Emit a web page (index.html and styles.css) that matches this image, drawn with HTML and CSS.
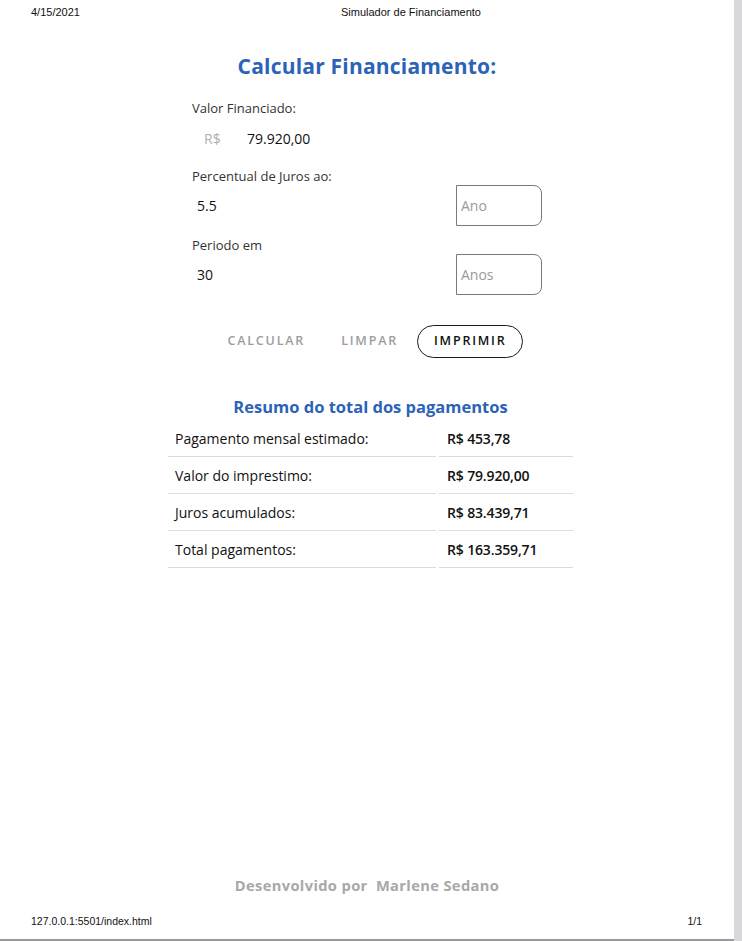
FILE: index.html
```html
<!DOCTYPE html>
<html lang="pt-BR">
<head>
<meta charset="utf-8">
<title>Simulador de Financiamento</title>
<link rel="stylesheet" href="styles.css">
</head>
<body>
<div class="page">
  <header class="print-head">
    <span class="print-date">4/15/2021</span>
    <span class="print-title">Simulador de Financiamento</span>
  </header>

  <main class="sim">
    <h1 class="sim-title">Calcular Financiamento:</h1>

    <div class="field-label">Valor Financiado:</div>
    <div class="money-row">
      <span class="currency">R$</span>
      <span class="value">79.920,00</span>
    </div>

    <div class="field-label">Percentual de Juros ao:</div>
    <div class="input-row">
      <span class="num">5.5</span>
      <span class="unit-box">Ano</span>
    </div>

    <div class="field-label field-label-period">Periodo em</div>
    <div class="input-row">
      <span class="num">30</span>
      <span class="unit-box">Anos</span>
    </div>

    <div class="actions">
      <span class="btn btn-text">CALCULAR</span>
      <span class="btn btn-text">LIMPAR</span>
      <span class="btn btn-outline">IMPRIMIR</span>
    </div>
  </main>

  <section class="summary">
    <h2 class="summary-title">Resumo do total dos pagamentos</h2>
    <div class="summary-grid">
      <div class="cell">Pagamento mensal estimado:</div>
      <div class="cell amount">R$ 453,78</div>
      <div class="cell">Valor do imprestimo:</div>
      <div class="cell amount">R$ 79.920,00</div>
      <div class="cell">Juros acumulados:</div>
      <div class="cell amount">R$ 83.439,71</div>
      <div class="cell">Total pagamentos:</div>
      <div class="cell amount">R$ 163.359,71</div>
    </div>
  </section>

  <div class="spacer"></div>

  <p class="credit">Desenvolvido por&nbsp; Marlene Sedano</p>

  <footer class="print-foot">
    <span>127.0.0.1:5501/index.html</span>
    <span>1/1</span>
  </footer>
</div>
</body>
</html>
```

FILE: styles.css
```css
html, body {
  margin: 0;
  padding: 0;
}

body {
  width: 742px;
  height: 941px;
  background: linear-gradient(to right, #a7a7ab 0, #c4c4c8 3px, #d8d8dc 8px);
  background-color: #d4d4d8;
  overflow: hidden;
}

.page {
  width: 734px;
  height: 939px;
  background: #ffffff;
  display: flex;
  flex-direction: column;
  border-bottom: 2px solid #9a9a9e;
  font-family: "Open Sans", "Noto Sans", sans-serif;
  color: #222;
}

.print-head {
  height: 24px;
  display: flex;
  align-items: center;
  font-family: "Liberation Sans", Arial, sans-serif;
  font-size: 11px;
  color: #111;
  padding-left: 31px;
}

.print-title {
  margin-left: 261px;
}

.sim {
  width: 350px;
  margin: 0 auto;
  display: flex;
  flex-direction: column;
}

.sim-title {
  margin: 22px 0 13px;
  height: 40px;
  line-height: 40px;
  text-align: center;
  font-family: "Open Sans", sans-serif;
  font-weight: 700;
  font-size: 21px;
  letter-spacing: 0.2px;
  color: #2b63b9;
}

.field-label {
  line-height: 18px;
  margin: 9px 0 1px;
  font-size: 13px;
  color: #333;
}

.sim-title + .field-label {
  margin-top: 0;
}

.field-label-period {
  margin-top: 10px;
}

.money-row {
  height: 40px;
  display: flex;
  align-items: center;
  font-size: 14px;
}

.currency {
  color: #b0b0b0;
  margin-left: 12px;
  width: 43px;
}

.value {
  color: #111;
}

.input-row {
  height: 41px;
  display: flex;
  align-items: center;
  justify-content: space-between;
  font-size: 14px;
}

.field-label + .input-row {
  margin-top: -1px;
}

.num {
  margin-left: 5px;
  color: #111;
}

.unit-box {
  box-sizing: border-box;
  width: 86px;
  height: 41px;
  border: 1px solid #7a7a7a;
  border-radius: 0 8px 8px 0;
  display: flex;
  align-items: center;
  padding-left: 4px;
  color: #9a9a9a;
  font-size: 14px;
}

.actions {
  margin-top: 30px;
  display: flex;
  justify-content: center;
  align-items: center;
  padding-right: 2px;
}

.btn {
  font-size: 12.5px;
  font-weight: 600;
  letter-spacing: 1.8px;
  line-height: 1;
}

.btn-text {
  color: #9d9d9d;
  padding: 0 18px;
}

.btn-outline {
  box-sizing: border-box;
  height: 33px;
  padding: 0 15px 0 16px;
  display: flex;
  align-items: center;
  border: 1.5px solid #1a1a1a;
  border-radius: 17px;
  color: #111;
  margin-left: 1px;
}

.summary {
  width: 405px;
  margin: 37px 0 0 168px;
}

.summary-title {
  margin: 0 0 1px;
  line-height: 24px;
  text-align: center;
  font-family: "Open Sans", sans-serif;
  font-weight: 700;
  font-size: 16.5px;
  color: #2b63b9;
}

.summary-grid {
  display: grid;
  grid-template-columns: 268px 134px;
  column-gap: 3px;
}

.cell {
  box-sizing: border-box;
  height: 37px;
  border-bottom: 1px solid #dcdcdc;
  display: flex;
  align-items: center;
  padding-left: 7px;
  font-size: 14px;
  color: #111;
}

.amount {
  padding-left: 8px;
  font-weight: 600;
  letter-spacing: -0.15px;
}

.spacer {
  flex: 1;
}

.credit {
  margin: 0 0 20px;
  text-align: center;
  font-weight: 700;
  font-size: 14.7px;
  color: #a8a8a8;
  letter-spacing: 0.35px;
}

.print-foot {
  height: 24px;
  display: flex;
  justify-content: space-between;
  align-items: flex-start;
  padding: 0 32px 0 31px;
  font-family: "Liberation Sans", Arial, sans-serif;
  font-size: 10.5px;
  color: #111;
}
```
